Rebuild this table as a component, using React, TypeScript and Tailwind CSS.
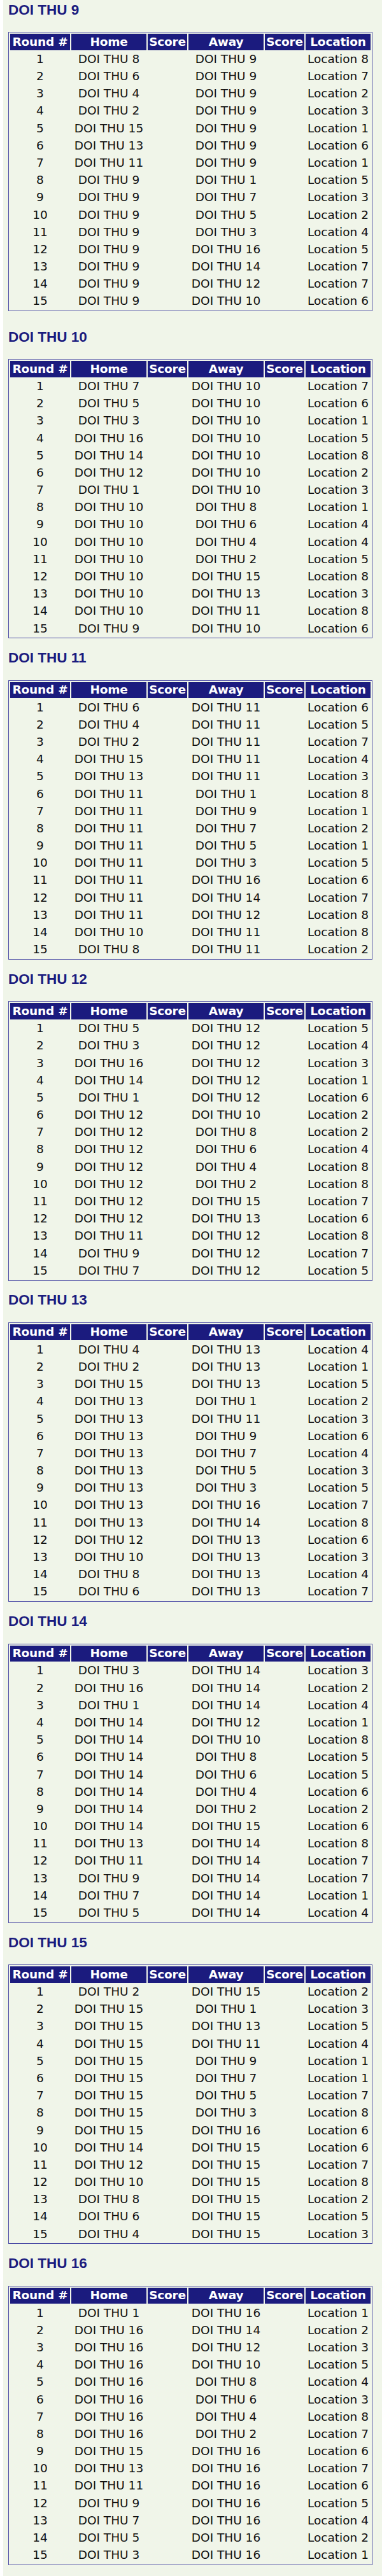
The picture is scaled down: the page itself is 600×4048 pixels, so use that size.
// Round-robin schedule, one table per team
type Game = [number, number, number] // home, away, location

const schedules: { team: number; games: Game[] }[] = [
  {
    team: 9,
    games: [
      [8, 9, 8], [6, 9, 7], [4, 9, 2], [2, 9, 3], [15, 9, 1], [13, 9, 6], [11, 9, 1], [9, 1, 5],
      [9, 7, 3], [9, 5, 2], [9, 3, 4], [9, 16, 5], [9, 14, 7], [9, 12, 7], [9, 10, 6],
    ],
  },
  {
    team: 10,
    games: [
      [7, 10, 7], [5, 10, 6], [3, 10, 1], [16, 10, 5], [14, 10, 8], [12, 10, 2], [1, 10, 3], [10, 8, 1],
      [10, 6, 4], [10, 4, 4], [10, 2, 5], [10, 15, 8], [10, 13, 3], [10, 11, 8], [9, 10, 6],
    ],
  },
  {
    team: 11,
    games: [
      [6, 11, 6], [4, 11, 5], [2, 11, 7], [15, 11, 4], [13, 11, 3], [11, 1, 8], [11, 9, 1], [11, 7, 2],
      [11, 5, 1], [11, 3, 5], [11, 16, 6], [11, 14, 7], [11, 12, 8], [10, 11, 8], [8, 11, 2],
    ],
  },
  {
    team: 12,
    games: [
      [5, 12, 5], [3, 12, 4], [16, 12, 3], [14, 12, 1], [1, 12, 6], [12, 10, 2], [12, 8, 2], [12, 6, 4],
      [12, 4, 8], [12, 2, 8], [12, 15, 7], [12, 13, 6], [11, 12, 8], [9, 12, 7], [7, 12, 5],
    ],
  },
  {
    team: 13,
    games: [
      [4, 13, 4], [2, 13, 1], [15, 13, 5], [13, 1, 2], [13, 11, 3], [13, 9, 6], [13, 7, 4], [13, 5, 3],
      [13, 3, 5], [13, 16, 7], [13, 14, 8], [12, 13, 6], [10, 13, 3], [8, 13, 4], [6, 13, 7],
    ],
  },
  {
    team: 14,
    games: [
      [3, 14, 3], [16, 14, 2], [1, 14, 4], [14, 12, 1], [14, 10, 8], [14, 8, 5], [14, 6, 5], [14, 4, 6],
      [14, 2, 2], [14, 15, 6], [13, 14, 8], [11, 14, 7], [9, 14, 7], [7, 14, 1], [5, 14, 4],
    ],
  },
  {
    team: 15,
    games: [
      [2, 15, 2], [15, 1, 3], [15, 13, 5], [15, 11, 4], [15, 9, 1], [15, 7, 1], [15, 5, 7], [15, 3, 8],
      [15, 16, 6], [14, 15, 6], [12, 15, 7], [10, 15, 8], [8, 15, 2], [6, 15, 5], [4, 15, 3],
    ],
  },
  {
    team: 16,
    games: [
      [1, 16, 1], [16, 14, 2], [16, 12, 3], [16, 10, 5], [16, 8, 4], [16, 6, 3], [16, 4, 8], [16, 2, 7],
      [15, 16, 6], [13, 16, 7], [11, 16, 6], [9, 16, 5], [7, 16, 4], [5, 16, 2], [3, 16, 1],
    ],
  },
]

const headers = ['Round #', 'Home', 'Score', 'Away', 'Score', 'Location']

function ScheduleTable({ games }: { games: Game[] }) {
  return (
    <table className="border-separate border-spacing-[2px] border border-[#4b4ba5] text-center font-['DejaVu_Sans',Verdana,sans-serif] text-[18.5px] leading-none text-[#111]">
      <colgroup>
        <col className="w-[94px]" />
        <col className="w-[118px]" />
        <col className="w-[62px]" />
        <col className="w-[118px]" />
        <col className="w-[62px]" />
        <col className="w-[102px]" />
      </colgroup>
      <thead>
        <tr>
          {headers.map((h, i) => (
            <th
              key={i}
              className="h-[25.5px] whitespace-nowrap bg-[#1b1b7e] p-0 font-bold tracking-[-0.2px] text-white"
            >
              {h}
            </th>
          ))}
        </tr>
      </thead>
      <tbody>
        {games.map(([home, away, loc], i) => (
          <tr key={i}>
            <td className="h-[25.2px] p-0">{i + 1}</td>
            <td className="p-0 whitespace-nowrap">DOI THU {home}</td>
            <td className="p-0"></td>
            <td className="p-0 whitespace-nowrap">DOI THU {away}</td>
            <td className="p-0"></td>
            <td className="p-0 whitespace-nowrap">Location {loc}</td>
          </tr>
        ))}
      </tbody>
    </table>
  )
}

export default function App() {
  return (
    <div className="flex min-h-[4048px] w-[600px] bg-white">
      <div className="w-[5px] shrink-0 bg-white" />
      <div className="flex-1 bg-[#f0f5e9] pt-[2.5px] pl-[8px]">
        {schedules.map((s, idx) => (
          <section key={s.team} className={idx === 0 ? 'pb-[27.3px]' : 'pb-[17.8px]'}>
            <h2 className="h-[26px] font-['Liberation_Sans',Arial,sans-serif] text-[22.5px] font-bold leading-[26px] text-[#1b1b7e]">
              DOI THU {s.team}
            </h2>
            <div className="mt-[21.5px]">
              <ScheduleTable games={s.games} />
            </div>
          </section>
        ))}
      </div>
    </div>
  )
}
